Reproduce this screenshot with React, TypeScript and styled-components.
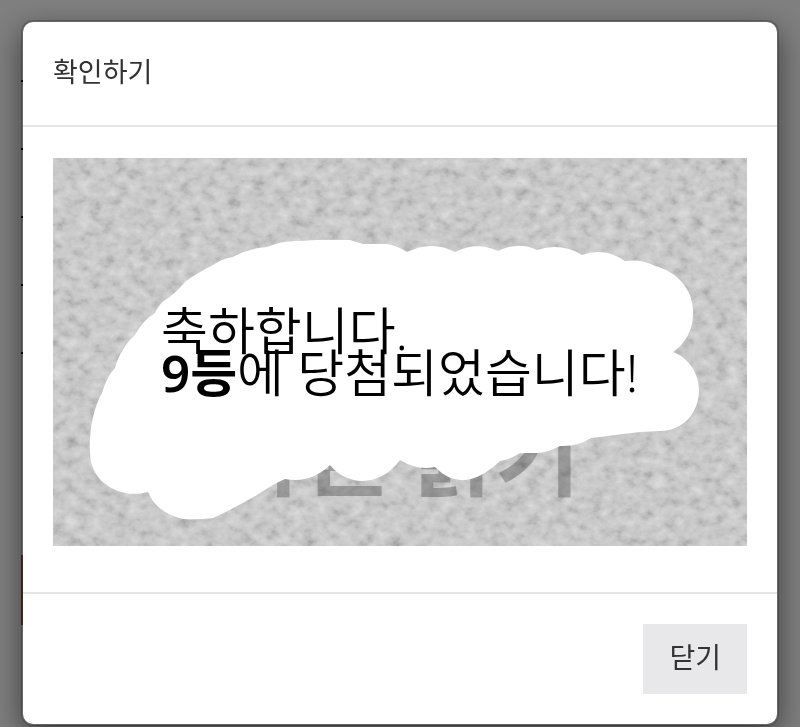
import React from "react";
import styled, { createGlobalStyle } from "styled-components";

const GlobalStyle = createGlobalStyle`
  *, *::before, *::after { box-sizing: border-box; }
  body {
    margin: 0;
    background: #fff;
    color: #333;
    font-family: "Noto Sans CJK KR", "Noto Sans", sans-serif;
    overflow: hidden;
  }
`;

const Page = styled.div`
  display: flex;
  flex-direction: column;
  min-height: 100vh;
  padding: 0 21px;
`;

const PageRows = styled.div`
  display: flex;
  flex-direction: column;
  padding-top: 80px;
  gap: 66px;
  height: 555px;
`;

const RowMark = styled.span`
  flex: none;
  width: 8px;
  height: 2px;
  background: #000;
`;

const PageAction = styled.div`
  width: 50%;
  height: 70px;
  background: #b8604a;
`;

const Overlay = styled.div`
  position: fixed;
  inset: 0;
  padding: 20px 21px;
  background: rgba(0, 0, 0, 0.5);
  overflow: hidden;
`;

const Dialog = styled.section`
  display: flex;
  flex-direction: column;
  background: #fff;
  background-clip: padding-box;
  border: 2px solid rgba(0, 0, 0, 0.2);
  border-radius: 12px;
  box-shadow: 0 10px 30px rgba(0, 0, 0, 0.5);
`;

const Header = styled.header`
  padding: 27px 30px 33px;
  border-bottom: 2px solid #e5e5e5;
`;

const Title = styled.h1`
  margin: 0;
  font-size: 27px;
  font-weight: 400;
  line-height: 43px;
`;

const Body = styled.div`
  padding: 31px 30px 46px;
`;

const ScratchCard = styled.div`
  display: grid;
  align-items: start;

  & > * { grid-area: 1 / 1; }
`;

const Cover = styled.svg`
  display: block;
  width: 100%;
  height: auto;
`;

const Result = styled.p`
  margin: 0;
  padding: 151px 0 0 108px;
  color: #000;
  font-family: "Noto Sans", "Noto Sans CJK KR", sans-serif;
  font-size: 51px;
  font-weight: 350;
  line-height: 42px;
  white-space: nowrap;
`;

const Rank = styled.b`
  font-weight: 600;
`;

const Footer = styled.footer`
  display: flex;
  justify-content: flex-end;
  padding: 30px;
  border-top: 2px solid #e5e5e5;
`;

const CloseButton = styled.button`
  height: 70px;
  padding: 0 26px 7px;
  border: 0;
  background: #e8e8ea;
  color: #333;
  font: inherit;
  font-size: 28px;
  line-height: 40px;
  cursor: pointer;
`;

const revealed =
  "M70 192 Q74 184 82 177 Q90 162 102 155 Q106 146 112 142 Q122 136 132 124 Q144 115 160 107 Q168 101 180 99 Q196 90 214 89 Q230 82 247 83 Q272 81 297 82 Q304 84 310 86 L334 86 Q345 88 354 94 Q379 82 402 94 Q424 83 445 93 Q466 83 484 92 Q508 84 529 97 Q552 89 572 103 Q588 101 602 108 C622 113 640 130 640 153 C641 172 632 186 620 194 C636 200 646 216 646 232 C646 255 630 273 607 273 L587 274 L538 280 Q524 289 507 288 Q494 295 484 295 L467 295 Q456 302 447 303 Q410 338 382 309 Q365 313 347 302 C327 330 293 328 277 307 Q257 326 232 321 Q222 325 204 337 Q182 350 160 360 Q145 362 130 361 C112 357 100 347 95 334 C66 342 37 323 37 295 C36 273 40 251 49 235 Q54 218 62 210 Q65 199 70 192 Z";

const grainLevels = "0.6 0.66 0.715 0.76 0.79 0.81 0.835 0.86 0.88";

export default function App() {
  return (
    <>
      <GlobalStyle />
      <Page aria-hidden="true">
        <PageRows>
          <RowMark />
          <RowMark />
          <RowMark />
          <RowMark />
          <RowMark />
        </PageRows>
        <PageAction />
      </Page>
      <Overlay>
        <Dialog role="dialog" aria-modal="true" aria-labelledby="dialog-title">
          <Header>
            <Title id="dialog-title">확인하기</Title>
          </Header>
          <Body>
            <ScratchCard>
              <Cover viewBox="0 0 694 388" aria-hidden="true">
                <defs>
                  <filter id="grain" x="0" y="0" width="100%" height="100%" colorInterpolationFilters="sRGB">
                    <feTurbulence type="fractalNoise" baseFrequency="0.08 0.1" numOctaves="4" seed="21" />
                    <feColorMatrix values="1 0 0 0 0  1 0 0 0 0  1 0 0 0 0  0 0 0 0 1" />
                    <feComponentTransfer>
                      <feFuncR type="table" tableValues={grainLevels} />
                      <feFuncG type="table" tableValues={grainLevels} />
                      <feFuncB type="table" tableValues={grainLevels} />
                    </feComponentTransfer>
                  </filter>
                </defs>
                <rect width="694" height="388" filter="url(#grain)" />
                <text
                  x="346"
                  y="331"
                  textAnchor="middle"
                  fontFamily="'Noto Sans CJK KR', sans-serif"
                  fontSize="93"
                  fontWeight="700"
                  fill="#000"
                  fillOpacity="0.25"
                >
                  복권 긁기
                </text>
                <path d={revealed} fill="#fff" />
              </Cover>
              <Result>
                축하합니다.
                <br />
                <Rank>9등</Rank>에 당첨되었습니다!
              </Result>
            </ScratchCard>
          </Body>
          <Footer>
            <CloseButton type="button">닫기</CloseButton>
          </Footer>
        </Dialog>
      </Overlay>
    </>
  );
}
